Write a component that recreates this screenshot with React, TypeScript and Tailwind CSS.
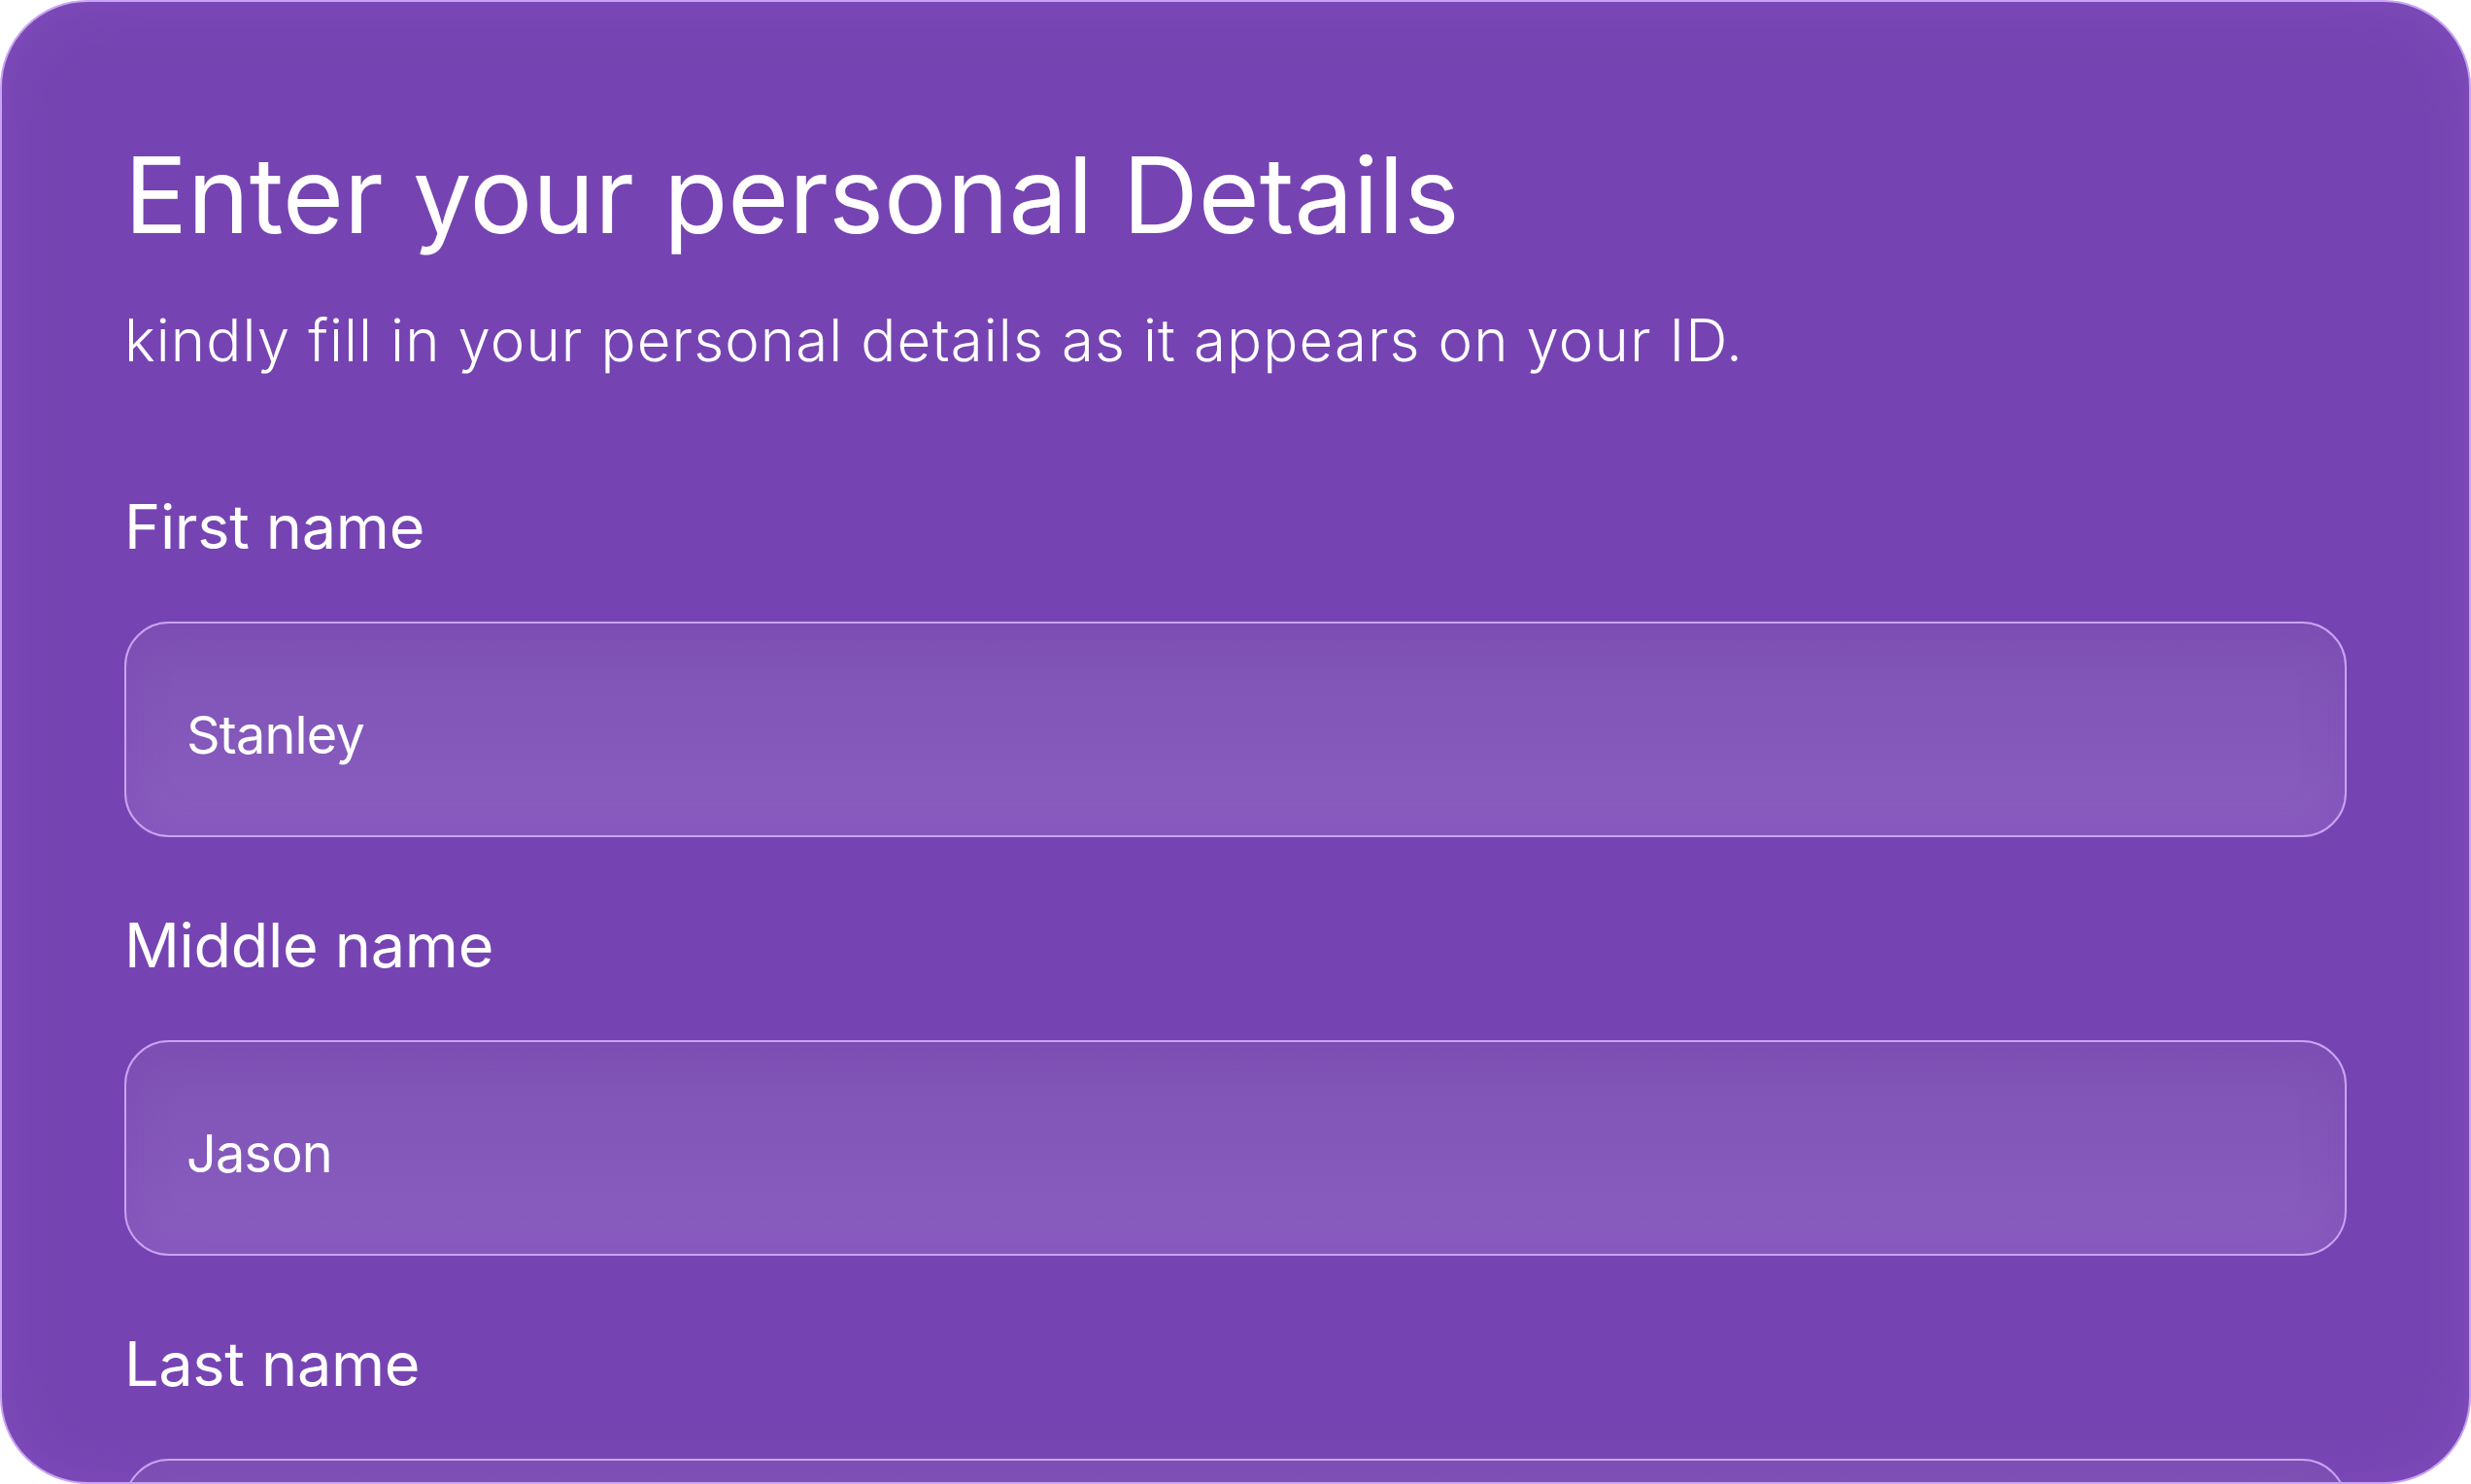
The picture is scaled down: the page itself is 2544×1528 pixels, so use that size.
import React from "react";

const font = { fontFamily: "Inter, 'Noto Sans', sans-serif" };

function Field({ label, value }: { label: string; value?: string }) {
  return (
    <div className="flex flex-col">
      <label className="text-[63px] leading-[1] font-normal text-white tracking-[-0.005em]">{label}</label>
      <div className="mt-[66px] h-[222px] w-full shrink-0 rounded-[46px] border-2 border-[#c9a3f4] bg-gradient-to-b from-[#7e51b4] to-[#8a5dc0] shadow-[inset_0_0_40px_rgba(120,70,180,0.35)] flex items-center pl-[62px] pt-[12px]">
        <span className="text-[54px] leading-[1] text-white tracking-[-0.015em]">{value}</span>
      </div>
    </div>
  );
}

export default function App() {
  return (
    <div className="w-[2544px] h-[1528px] bg-white" style={font}>
      <div className="w-full h-full rounded-[90px] border-2 border-[#c9a3f4] bg-[#7644b2] shadow-[inset_0_0_60px_rgba(140,90,200,0.45)] overflow-hidden px-[126px] pt-[145px]">
        <h1 className="text-[108px] leading-[1] font-normal text-white tracking-normal">
          Enter your personal Details
        </h1>
        <p className="mt-[65px] text-[60px] leading-[1] font-light text-white tracking-[0.018em]">
          kindly fill in your personal details as it appears on your ID.
        </p>
        <div className="mt-[131px] flex flex-col gap-[80px]">
          <Field label="First name" value="Stanley" />
          <Field label="Middle name" value="Jason" />
          <Field label="Last name" />
        </div>
      </div>
    </div>
  );
}
